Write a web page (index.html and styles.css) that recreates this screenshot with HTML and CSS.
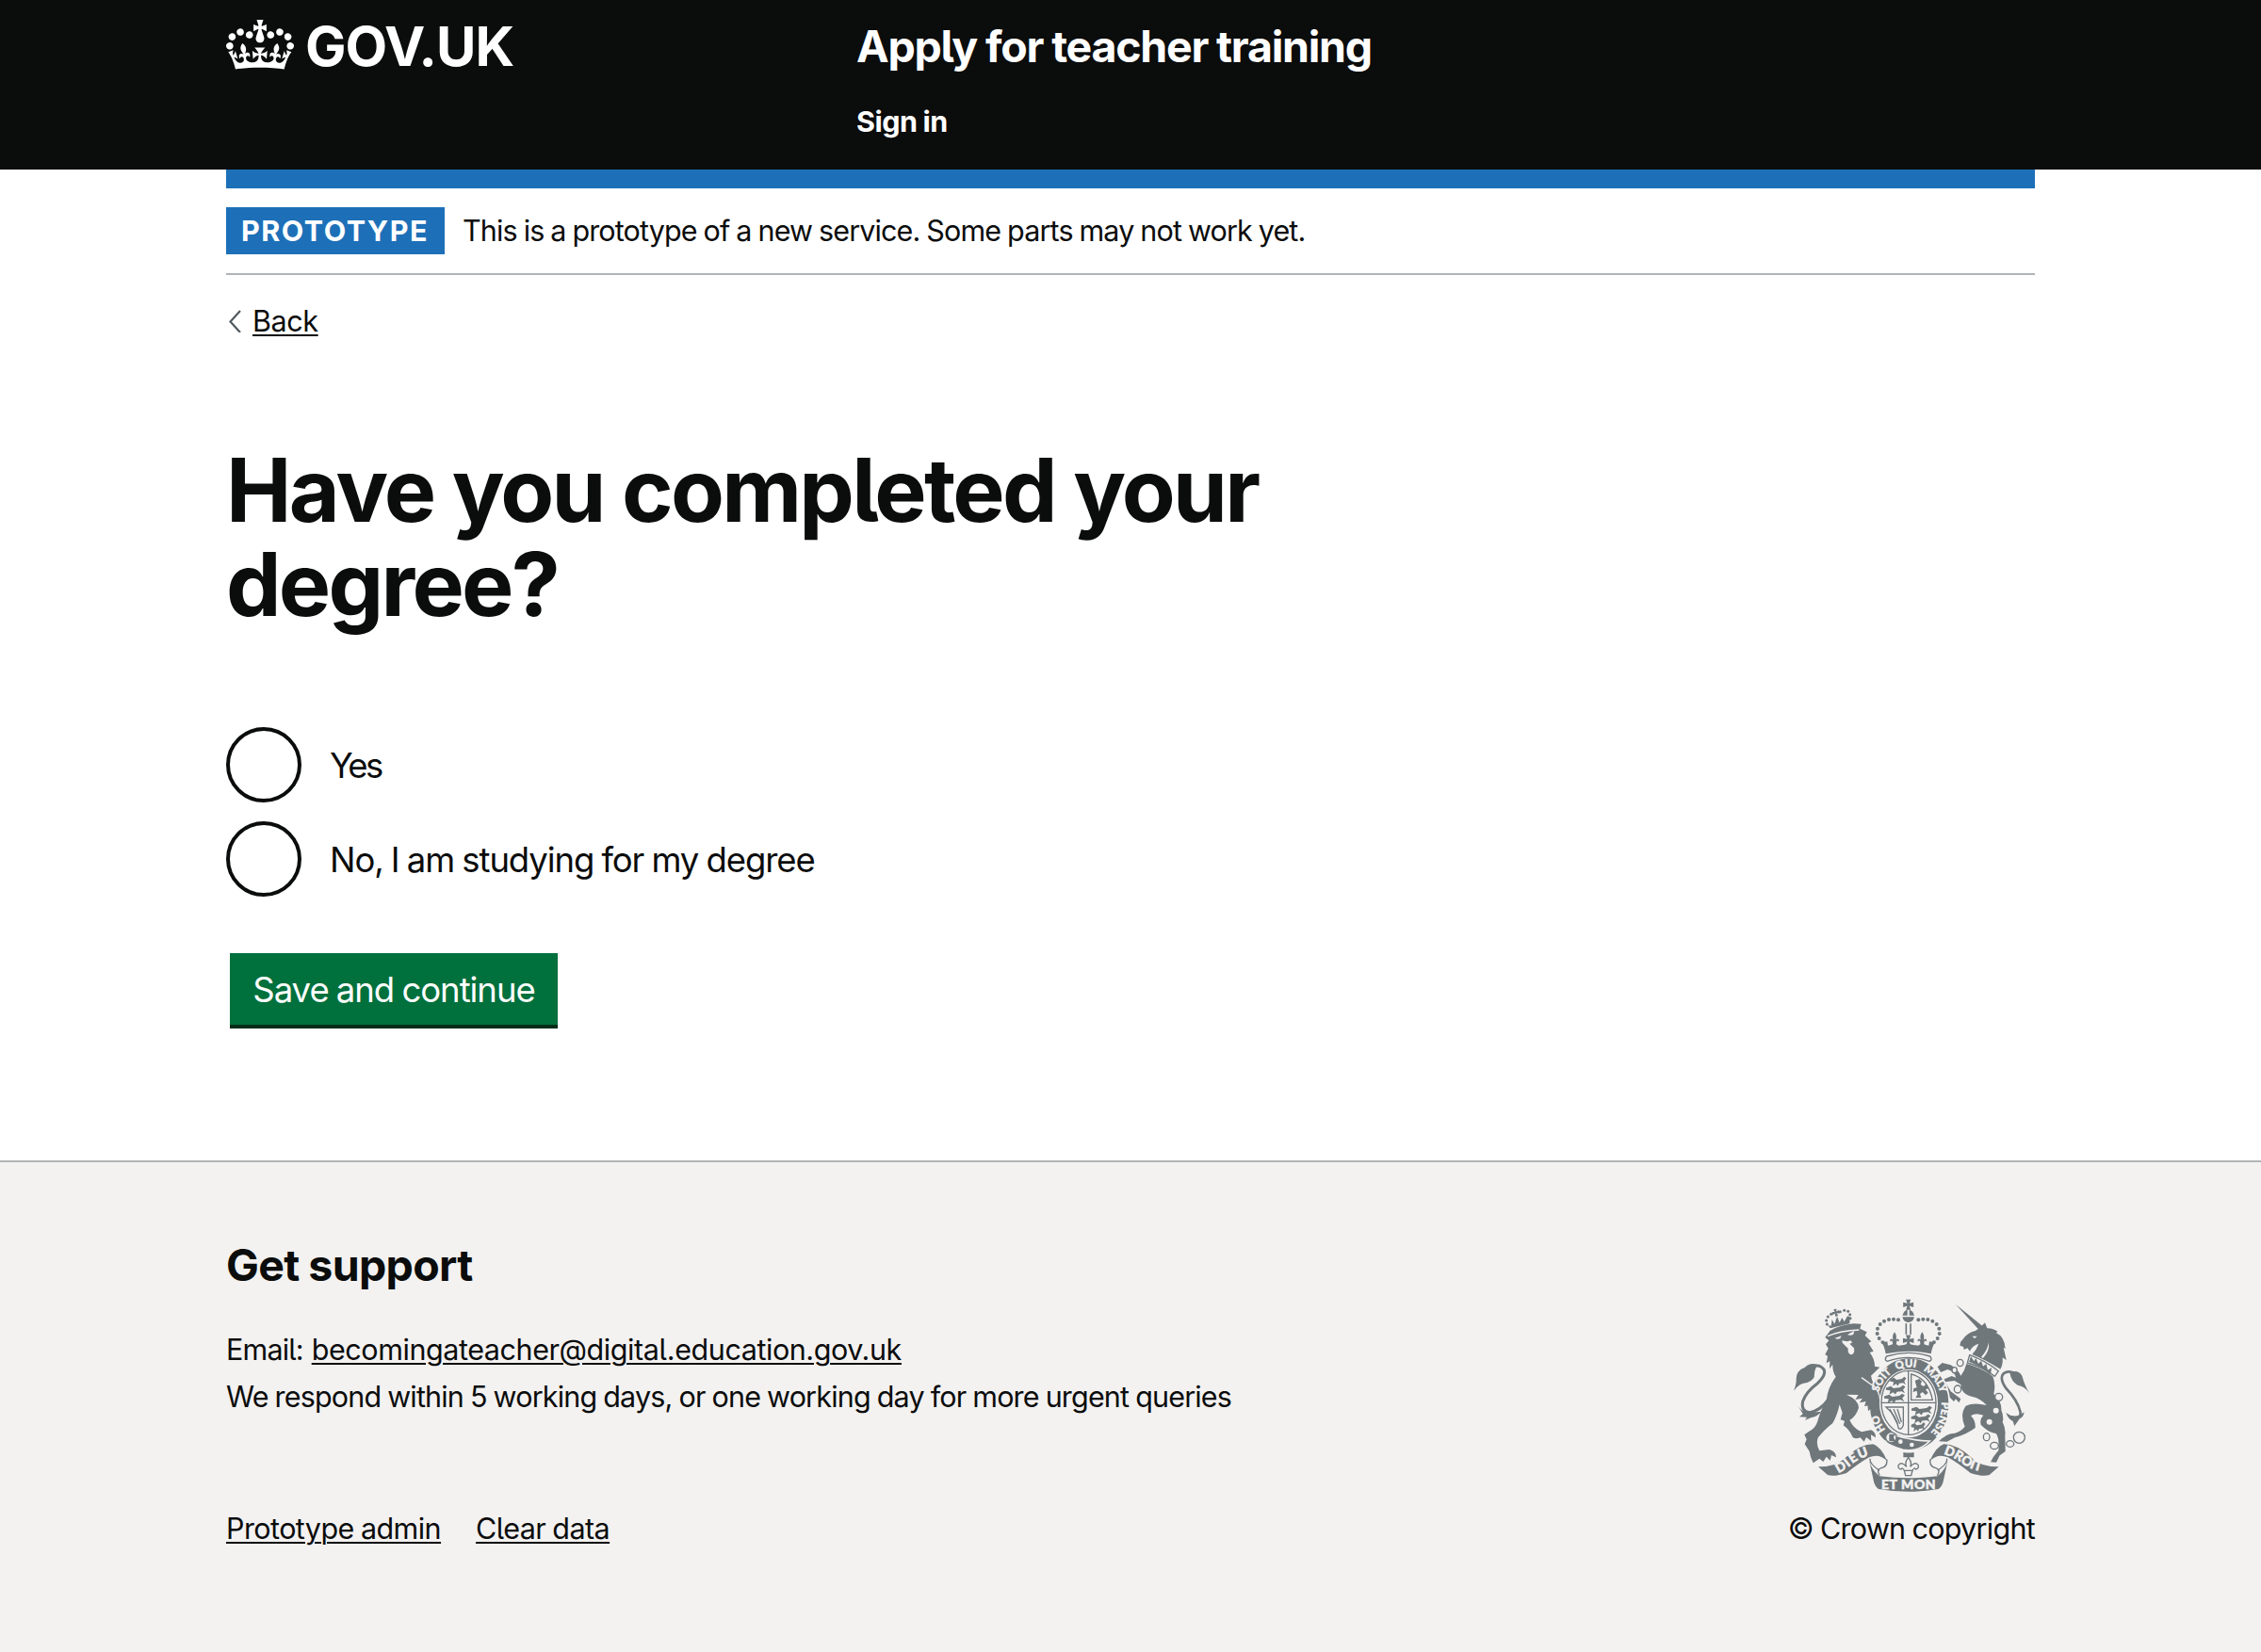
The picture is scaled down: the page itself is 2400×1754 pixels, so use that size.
FILE: index.html
```html
<!DOCTYPE html>
<html lang="en">
<head>
<meta charset="utf-8">
<title>Have you completed your degree? - Apply for teacher training</title>
<link rel="stylesheet" href="styles.css">
</head>
<body>
<header class="header">
  <div class="container header-row">
    <a class="logo" href="#" aria-label="GOV.UK">
      <svg class="crown" viewBox="0 0 132 97" width="72" height="53" aria-hidden="true"><path fill="currentColor" fill-rule="evenodd" d="M25 30.2c3.5 1.5 7.7-.2 9.1-3.7 1.5-3.6-.2-7.8-3.9-9.2-3.6-1.4-7.6.3-9.1 3.9-1.4 3.5.3 7.5 3.9 9zM9 39.5c3.6 1.5 7.8-.2 9.2-3.7 1.5-3.6-.2-7.8-3.9-9.1-3.6-1.5-7.6.2-9.1 3.8-1.4 3.5.3 7.5 3.8 9zM4.4 57.2c3.5 1.5 7.7-.2 9.1-3.8 1.5-3.6-.2-7.7-3.9-9.1-3.5-1.5-7.6.3-9.1 3.8-1.4 3.5.3 7.6 3.9 9.1zm38.3-21.4c3.5 1.5 7.7-.2 9.1-3.8 1.5-3.6-.2-7.7-3.9-9.1-3.6-1.5-7.6.3-9.1 3.8-1.3 3.6.4 7.7 3.9 9.1zm64.4-5.6c-3.6 1.5-7.8-.2-9.1-3.7-1.5-3.6.2-7.8 3.8-9.2 3.6-1.4 7.7.3 9.2 3.9 1.3 3.5-.4 7.5-3.9 9zm15.9 9.3c-3.6 1.5-7.7-.2-9.1-3.7-1.5-3.6.2-7.8 3.7-9.1 3.6-1.5 7.7.2 9.2 3.8 1.5 3.5-.3 7.5-3.8 9zm4.7 17.7c-3.6 1.5-7.8-.2-9.2-3.8-1.5-3.6.2-7.7 3.9-9.1 3.6-1.5 7.7.3 9.2 3.8 1.3 3.5-.4 7.6-3.9 9.1zM89.3 35.8c-3.6 1.5-7.8-.2-9.2-3.8-1.4-3.6.2-7.7 3.9-9.1 3.6-1.5 7.7.3 9.2 3.8 1.4 3.6-.3 7.7-3.9 9.1zM69.7 17.7l8.9 4.7V9.3l-8.9 2.8c-.2-.3-.5-.6-.9-.9L72.4 0H59.6l3.5 11.2c-.3.3-.6.5-.9.9l-8.8-2.8v13.1l8.8-4.7c.3.3.6.7.9.9l-5 15.4v.1c-.2.8-.4 1.6-.4 2.4 0 4.1 3.1 7.5 7 8.1h.2c.3 0 .7.1 1 .1.4 0 .7 0 1-.1h.2c4-.6 7.1-4.1 7.1-8.1 0-.8-.1-1.7-.4-2.4V34l-5.1-15.4c.4-.2.7-.6 1-.9zM66 92.8c16.9 0 32.8 1.1 47.1 3.2 4-16.9 8.9-26.7 14-33.5l-9.6-3.4c1 4.9 1.1 7.2 0 10.2-1.5-1.4-3-4.3-4.2-8.7L108.6 76c2.8-2 5-3.2 7.5-3.3-4.4 9.4-10 11.9-13.6 11.2-4.3-.8-6.3-4.6-5.6-7.9 1-4.7 5.7-5.9 8-.5 4.3-8.7-3-11.4-7.6-8.8 7.1-7.2 7.9-13.5 2.1-21.1-8 6.1-8.1 12.3-4.5 20.8-4.7-5.4-12.1-2.5-9.5 6.2 3.4-5.2 7.9-2 7.2 3.1-.6 4.3-6.4 7.8-13.5 7.2-10.3-.9-10.9-8-11.2-13.8 2.5-.5 7.1 1.8 11 7.3L80.2 60c-4.1 4.4-8 5.3-12.3 5.4 1.4-4.4 8-11.6 8-11.6H55.5s6.4 7.2 7.9 11.6c-4.2-.1-8-1-12.3-5.4l1.4 16.4c3.9-5.5 8.5-7.7 10.9-7.3-.3 5.8-.9 12.8-11.1 13.8-7.2.6-12.9-2.9-13.5-7.2-.7-5 3.8-8.3 7.1-3.1 2.7-8.7-4.6-11.6-9.4-6.2 3.7-8.5 3.6-14.7-4.6-20.8-5.8 7.6-5 13.9 2.2 21.1-4.7-2.6-11.9.1-7.7 8.8 2.3-5.5 7.1-4.2 8.1.5.7 3.3-1.3 7.1-5.7 7.9-3.5.7-9-1.8-13.5-11.2 2.5.1 4.7 1.3 7.5 3.3l-4.7-15.4c-1.2 4.4-2.7 7.2-4.3 8.7-1.1-3-.9-5.3 0-10.2l-9.5 3.4c5 6.9 9.9 16.7 14 33.5 14.8-2.1 30.8-3.2 47.7-3.2z"/></svg>
      <span class="logo-text">GOV.UK</span>
    </a>
    <div class="header-content">
      <a class="service-name" href="#">Apply for teacher training</a>
      <a class="nav-link" href="#">Sign in</a>
    </div>
  </div>
</header>
<div class="container">
  <div class="header-bar"></div>
  <div class="phase-banner">
    <strong class="tag">PROTOTYPE</strong>
    <span class="phase-text">This is a prototype of a new service. Some parts may not work yet.</span>
  </div>
  <a class="back-link" href="#">
    <svg class="chevron" viewBox="0 0 16 24" width="16" height="24" aria-hidden="true"><path d="M15 1 4.500 12.500 15 24" fill="none" stroke="#505a5f" stroke-width="2.200"/></svg>
    <span class="link">Back</span>
  </a>
  <main class="main">
    <h1 class="heading">Have you completed your<br>degree?</h1>
    <form class="form">
      <label class="radio"><input class="radio-input" type="radio" name="degree"><span class="radio-label radio-label-yes">Yes</span></label>
      <label class="radio"><input class="radio-input" type="radio" name="degree"><span class="radio-label">No, I am studying for my degree</span></label>
      <button class="button" type="button">Save and continue</button>
    </form>
  </main>
</div>
<footer class="footer">
  <div class="container footer-row">
    <div class="support">
      <h2 class="support-title">Get support</h2>
      <p class="support-text">Email: <a class="link email" href="#">becomingateacher@digital.education.gov.uk</a><br>We respond within 5 working days, or one working day for more urgent queries</p>
      <nav class="footer-links"><a class="link" href="#">Prototype admin</a><a class="link" href="#">Clear data</a></nav>
    </div>
    <div class="copyright">
      <svg class="crest" viewBox="72 60 750 612" width="250" height="204" aria-hidden="true">
        <defs>
          <path id="garter" d="M440 512A103 119 0 0 1 440 274A103 119 0 0 1 440 512"/>
          <path id="dieu" d="M214 612Q240 600 262 580Q290 560 322 554"/>
          <path id="droit" d="M549 552Q585 562 612 584Q645 606 695 611"/>
          <g id="pattee"><path d="M-7-15H7L3-4 15-7V7L3 3 7 15H-7L-3 3-15 7V-7L-3-4Z"/></g>
          <g id="fleur"><path d="M0-20Q9-8 4 3Q14-4 14 8L7 6 5 18H-5L-7 6-14 8Q-14-4-4 3Q-9-8 0-20Z"/></g>
          <g id="guard"><path d="M0 4l10-4 6 5 14-2 6-5 5 4-5 6 4 8-7-4-10 1-3 6-5-5-8 5 2-9-9-1z"/></g>
        </defs>
        <!-- lion -->
        <g class="ink">
          <g class="dots"><circle cx="178" cy="138" r="4.500"/><circle cx="176" cy="126" r="4.500"/><circle cx="181" cy="114" r="4.500"/><circle cx="191" cy="106" r="4.500"/><circle cx="220" cy="98" r="4.500"/><circle cx="233" cy="94" r="4.500"/><circle cx="245" cy="97" r="4.500"/><circle cx="251" cy="107" r="4.500"/><circle cx="252" cy="119" r="4.500"/></g>
          <use href="#pattee" transform="translate(206 101) rotate(-14) scale(.75)"/>
          <path d="M181 141l10 2 3-20 8 14 8-24 8 20 8-16 7 13 10-18 8 2-1 22-62 15z"/>
          <path d="M188 158Q222 140 262 136L287 137 283 152 305 163 299 174 319 193 310 198 326 224 314 228Q330 248 330 272L346 275 318 302 322 318Q340 340 346 372L349 410 336 400 334 418 322 405 309 414 312 397 297 399 302 384 282 388 290 374 268 378 278 363 240 362Q278 378 279 404 270 432 250 443 262 470 288 481L318 475Q334 482 333 499L318 490 319 510 303 498 296 512 284 499Q262 507 257 492 250 475 230 460L234 446 221 442 227 420 218 394Q210 430 196 453 165 478 149 500 142 520 154 541L185 537Q208 544 207 562L192 555 188 572 176 560 166 576 154 566 134 580Q124 560 122 543L107 520 113 505 106 490 121 479Q140 470 147 450 158 410 176 380 180 340 206 305 195 290 196 266L186 280 187 256 176 262 180 240 172 234 182 215 174 202 184 190 172 180Z"/>
          <path d="M150 268Q125 258 108 275 80 285 80 312 81 328 72 350 90 325 115 324 140 314 138 296 139 278 150 268ZM86 398Q100 422 130 419L160 416Q145 434 128 435L108 444 114 434 90 433 101 424Z"/>
          <path class="line" stroke-width="9" d="M182 378Q155 415 122 419 94 415 101 383 112 352 148 326 177 298 168 282 153 262 128 275"/>
        </g>
        <path class="gap" d="M203 182l21-7-4 8q-9 5-17-1zM243 171l22-12-3 11q-9 6-19 1zM226 190l16 3 12-3 4 7-8 3 14 14q4 20-10 21-11-4-9-20l-18-18z"/>
        <path class="gapline" d="M180 176Q220 158 280 156"/>
        <!-- unicorn -->
        <g class="ink">
          <path d="M588 75L664 158 676 146Z"/>
          <path d="M664 150L681 133 688 151Q706 150 722 162L716 165Q744 178 746 216L740 212 749 252 737 244Q739 268 730 281 680 250 640 234 655 218 661 200 640 206 633 224L625 214 614 219 612 209 602 207Q600 195 610 187 625 164 650 159Z"/>
          <path d="M622 264Q670 276 706 304 716 330 709 360 735 384 733 412 742 432 737 450 748 470 745 492L746 543 728 556 717 578 699 577 708 560 724 540Q728 500 716 486 690 482 668 458 663 440 676 428 650 418 636 430 652 445 650 468 620 490 585 499L560 512 534 511Q550 494 572 487 600 485 617 464 600 425 620 398 645 386 686 396 668 376 645 370 605 362 604 330L584 318 554 322 572 352 604 376 598 388 588 376 582 384 548 350 538 318 575 303 588 308Q586 290 562 282L540 291 530 274 545 261 572 268Q596 282 604 302 617 285 622 264Z"/>
          <path d="M760 293Q785 280 799 302 808 335 823 358 808 335 785 332 765 320 760 293ZM748 420Q775 442 806 418 803 436 792 438L775 462 770 447Q755 440 748 420Z"/>
          <path class="line" stroke-width="8" d="M762 432Q795 445 794 418 785 380 748 342 726 310 740 295 755 284 775 294"/>
        </g>
        <path class="gap" d="M640 176l16 0-8 7zM693 196q4 26-18 50l-6-4q20-20 24-46z"/>
        <path class="collar" d="M632 236Q682 254 724 287L712 304Q675 274 625 261Z"/>
        <path class="ink" d="M630 258l6-18 10 16 6-10 8 18 9-10 6 18 10-8 5 20 12-8-2 16-3 6q-25-24-58-37z"/>
        <g class="chain"><ellipse cx="602" cy="261" rx="10" ry="11"/><ellipse cx="584" cy="284" rx="8" ry="9"/><ellipse cx="594" cy="345" rx="11" ry="12"/><circle cx="725" cy="370" r="12"/><ellipse cx="686" cy="497" rx="10" ry="12"/><ellipse cx="711" cy="525" rx="13" ry="11"/><ellipse cx="761" cy="519" rx="12" ry="10"/><circle cx="790" cy="499" r="18"/></g>
        <g class="gap"><circle cx="716" cy="413" r="9"/><circle cx="695" cy="449" r="9"/></g>
        <!-- crown -->
        <g class="ink">
          <use href="#pattee" transform="translate(437 76) scale(1.1)"/>
          <path d="M418 110Q424 92 434 92V110ZM440 92Q452 94 456 110H440ZM418 115H456Q452 132 437 132 422 132 418 115Z"/>
          <path class="line" stroke-width="5" d="M430 136V170M444 136V170"/>
          <g class="dots"><circle cx="356" cy="196" r="6"/><circle cx="344" cy="183" r="6"/><circle cx="338" cy="168" r="6"/><circle cx="339" cy="152" r="6"/><circle cx="347" cy="138" r="6"/><circle cx="360" cy="128" r="6"/><circle cx="375" cy="123" r="6"/><circle cx="390" cy="122" r="6"/><circle cx="405" cy="124" r="6"/><circle cx="469" cy="124" r="6"/><circle cx="484" cy="122" r="6"/><circle cx="499" cy="123" r="6"/><circle cx="514" cy="128" r="6"/><circle cx="527" cy="138" r="6"/><circle cx="535" cy="152" r="6"/><circle cx="536" cy="168" r="6"/><circle cx="530" cy="183" r="6"/><circle cx="518" cy="196" r="6"/></g>
          <use href="#fleur" transform="translate(393 184) scale(1.050)"/><use href="#fleur" transform="translate(481 184) scale(1.050)"/>
          <use href="#pattee" transform="translate(437 190) scale(1.150)"/>
          <path d="M348 190Q358 196 370 193L372 206Q384 204 393 198L406 206Q422 204 437 200 452 204 468 206L481 198Q490 204 502 206L504 193Q516 196 526 190 514 204 509 232 437 216 365 232 360 204 348 190Z"/>
        </g>
        <!-- garter and shield -->
        <ellipse class="strap" cx="440" cy="393" rx="128" ry="149"/>
        <path class="ink" d="M280 300L322 330Q340 345 345 372L349 410 336 400 334 418 322 405 309 414 306 380Z"/>
        <path class="gapline" d="M288 308L330 338Q350 356 349 408"/>
        <ellipse class="gap" cx="438" cy="390" rx="93" ry="109"/>
        <ellipse class="thin" cx="438" cy="388" rx="87" ry="102"/>
        <path class="collar" d="M368 240Q437 218 506 240 515 252 504 256 437 232 370 256 359 252 368 240Z"/>
        <path class="thin" d="M437 287V490M351 388H525M446 379V297Q500 310 514 379ZM366 402H421V460Q415 475 406 470 400 430 366 402Z"/>
        <path class="thin" d="M378 408L402 455M390 408L410 455M402 408L415 450"/>
        <g class="ink"><use href="#guard" transform="translate(379 308) scale(1.25 1.4)"/><use href="#guard" transform="translate(366 335) scale(1.5 1.4)"/><use href="#guard" transform="translate(360 362) scale(1.6 1.4)"/><use href="#guard" transform="translate(447 401) scale(1.6 1.4)"/><use href="#guard" transform="translate(446 427) scale(1.5 1.4)"/><use href="#guard" transform="translate(446 453) scale(1.1 1.4)"/><path d="M458 318l14-6 8 8-4 10 10 6 8-8 8 14-10 4 8 10-8 8-10-10-8 6 4 12-18 0 6-10-2-12-12 4 2-12 10-2z"/></g>
        <g class="garter-text">
          <text><textPath href="#garter" startOffset="12.500%">HO</textPath></text>
          <text><textPath href="#garter" startOffset="30.500%">SOIT</textPath></text>
          <text><textPath href="#garter" startOffset="44%">QUI</textPath></text>
          <text><textPath href="#garter" startOffset="56.500%">MALY</textPath></text>
          <text><textPath href="#garter" startOffset="74%">PENSE</textPath></text>
        </g>
        <path class="strap" d="M378 486Q435 508 505 510 470 546 420 538 375 524 365 512Z"/>
        <circle class="collar" cx="382" cy="499" r="17"/><path class="ink" d="M376 488h18l-4 11 6 12h-20z"/>
        <g class="gap"><circle cx="412" cy="512" r="7"/><circle cx="448" cy="522" r="7"/></g>
        <!-- badge -->
        <path class="ink" d="M421 546Q437 549 455 546V562H421Z"/>
        <path class="collar" d="M437 562Q450 578 443 592 458 574 468 586 472 598 460 600 456 592 450 604L446 620H428L424 604Q418 592 414 600 402 598 406 586 416 574 431 592 424 578 437 562ZM422 604H452"/>
        <!-- motto ribbon -->
        <g class="ink"><path d="M150 592Q210 592 240 560 285 520 325 520 350 528 370 574 345 548 312 562 280 580 240 612 200 625 180 618Z"/><path d="M725 592Q665 592 635 560 590 520 550 520 525 528 505 574 530 548 563 562 595 580 635 612 675 625 695 618Z"/><path d="M312 570Q318 600 345 622 437 634 530 622 557 600 563 570L550 630Q546 655 533 663 437 680 342 663 329 655 325 630Z"/></g>
        <path class="thin" d="M368 568Q372 592 350 596 334 602 346 620M316 566Q310 580 345 604M507 568Q503 592 525 596 541 602 529 620M559 566Q565 580 530 604"/>
        <g class="motto"><text textLength="113"><textPath href="#dieu">DIEU</textPath></text><text x="351" y="662" textLength="173">ET MON</text><text><textPath href="#droit">DROIT</textPath></text></g>
      </svg>
      <a class="copyright-link" href="#">© Crown copyright</a>
    </div>
  </div>
</footer>
</body>
</html>
```
FILE: styles.css
```css
* { box-sizing: border-box; }
body {
  margin: 0;
  background: #fff;
  color: #0b0c0c;
  font-family: Inter, "Liberation Sans", sans-serif;
  font-feature-settings: "cv05" 1;
  font-size: 30.5px;
  line-height: 50px;
  letter-spacing: -0.85px;
  word-spacing: -0.8px;
}
a { color: inherit; text-decoration: none; }
.link { text-decoration: underline; text-decoration-thickness: 2px; text-underline-offset: 3px; }
.container { width: 1920px; margin: 0 auto; }
.header { height: 180px; background: #0b0c0c; color: #fff; }
.header-row { display: flex; }
.logo { display: flex; width: 669px; padding-top: 21px; }
.crown { flex: none; }
.logo-text { margin: -7px 0 0 12px; font-size: 58px; font-weight: 700; line-height: 70px; letter-spacing: -1px; }
.header-content { display: flex; flex-direction: column; align-items: flex-start; padding-top: 19px; }
.service-name { font-size: 46.5px; font-weight: 700; line-height: 60px; letter-spacing: -1.25px; word-spacing: -0.8px; }
.nav-link { margin: 25px 0 0; font-weight: 700; line-height: 50px; letter-spacing: -0.5px; }
.header-bar { height: 20px; background: #1d70b8; }
.phase-banner { display: flex; align-items: center; gap: 19px; height: 92px; border-bottom: 2px solid #b1b4b6; }
.tag { width: 232px; height: 50px; padding-left: 16px; background: #1d70b8; color: #fff; font-weight: 700; letter-spacing: 1.5px; }
.phase-text { letter-spacing: -0.87px; }
.back-link { display: flex; align-items: center; width: 120px; margin-top: 24px; gap: 12px; letter-spacing: -0.4px; }
.main { padding-top: 104px; }
.heading { margin: 0; font-size: 93px; font-weight: 700; line-height: 100px; letter-spacing: -2.75px; word-spacing: 0; }
.form { display: flex; flex-direction: column; align-items: flex-start; gap: 20px; padding-top: 102px; font-size: 36.5px; letter-spacing: -1.1px; word-spacing: -0.9px; }
.radio { display: flex; align-items: center; gap: 30px; height: 80px; }
.radio-label { padding-top: 2px; }
.radio-label-yes { letter-spacing: -2.6px; }
.radio-input { appearance: none; width: 80px; height: 80px; margin: 0; border: 4px solid #0b0c0c; border-radius: 50%; background: #fff; }
.button { width: 348px; height: 80px; margin: 40px 0 0 4px; padding: 2px 0 0; border: 0; border-bottom: 4px solid #002d18; background: #00703c; color: #fff; font: inherit; font-feature-settings: inherit; letter-spacing: -1.03px; word-spacing: -1px; }
.footer { height: 522px; margin-top: 140px; border-top: 2px solid #b1b4b6; background: #f3f2f1; }
.footer-row { display: flex; justify-content: space-between; }
.support { padding-top: 79px; }
.support-title { margin: 0; font-size: 46.5px; font-weight: 700; line-height: 60px; letter-spacing: -0.65px; }
.support-text { margin: 35px 0 0; letter-spacing: -0.83px; }
.email { margin-left: 2px; letter-spacing: -0.43px; }
.footer-links { display: flex; gap: 37px; margin-top: 90px; letter-spacing: -0.57px; }
.copyright { display: flex; flex-direction: column; align-items: flex-end; padding-top: 146px; }
.crest { margin-right: 6px; overflow: visible; letter-spacing: 0; word-spacing: 0; }
.copyright-link { margin-top: 14px; letter-spacing: -0.72px; }
.ink { fill: #6f777b; }
.line { fill: none; stroke: #6f777b; }
.gap { fill: #f3f2f1; }
.gapline { fill: none; stroke: #f3f2f1; stroke-width: 4; }
.thin { fill: none; stroke: #6f777b; stroke-width: 4; }
.collar { fill: #f3f2f1; stroke: #6f777b; stroke-width: 4; }
.strap { fill: #6f777b; stroke: #f3f2f1; stroke-width: 5; }
.chain { fill: #f3f2f1; stroke: #6f777b; stroke-width: 4; }
.garter-text { fill: #f3f2f1; stroke: #f3f2f1; stroke-width: 1.2; font-family: Lato, sans-serif; font-weight: 900; font-size: 34px; }
.motto { fill: #f3f2f1; stroke: #f3f2f1; stroke-width: 1.5; font-family: Lato, sans-serif; font-weight: 900; font-size: 42px; }
```
